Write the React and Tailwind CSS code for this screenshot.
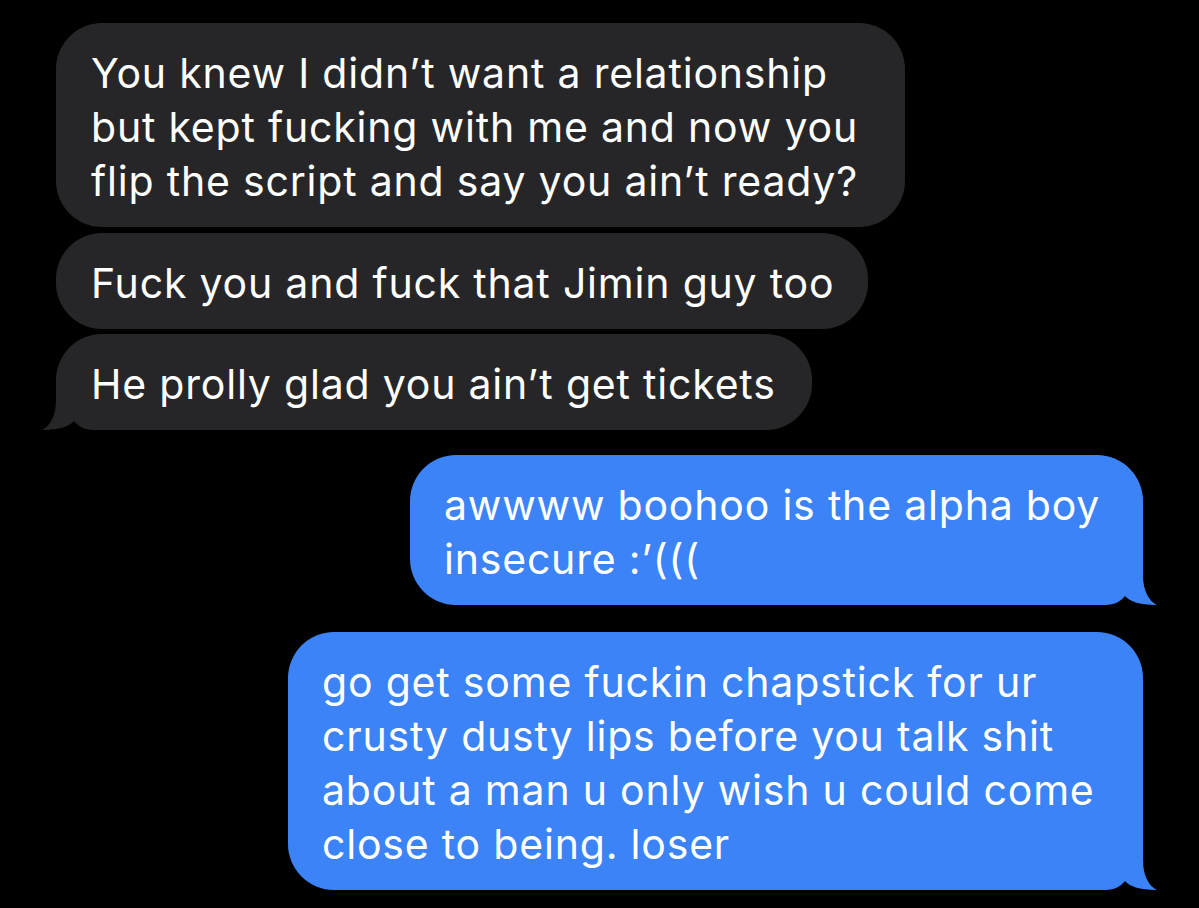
import React from "react";

function Tail({ color, side }) {
  const pos = side === "right" ? "right-[-14px]" : "left-[-14px] -scale-x-100";
  return (
    <svg
      className={`absolute bottom-0 ${pos}`}
      width="60"
      height="50"
      viewBox="0 0 60 50"
    >
      <path
        d="M0,50 L8,50 C18,50 24,46 28,41 C32,46 42,50 60,50 C52,46 46,36 46,20 L46,0 L0,0 Z"
        fill={color}
      />
    </svg>
  );
}

function Bubble({ lines, mine, tail, w, px }) {
  const bg = mine ? "bg-[#3b83f6]" : "bg-[#262628]";
  return (
    <div
      className={`relative ${mine ? "self-end" : "self-start"} ${bg} rounded-[46px] pt-[23px] pb-[19px] ${w} ${px}`}
    >
      {tail && <Tail color={mine ? "#3b83f6" : "#262628"} side={mine ? "right" : "left"} />}
      {lines.map((l, i) => (
        <div key={i} className="relative whitespace-nowrap text-white text-[41px] leading-[54px] tracking-[0.8px]">
          {l}
        </div>
      ))}
    </div>
  );
}

export default function App() {
  return (
    <div
      className="w-[1199px] h-[908px] bg-black overflow-hidden flex flex-col pt-[23px] pl-[56px] pr-[56px]"
      style={{ fontFamily: "Inter, 'Liberation Sans', sans-serif" }}
    >
      <Bubble
        w="w-[849px]"
        px="pl-[35px]"
        lines={[
          "You knew I didn’t want a relationship",
          "but kept fucking with me and now you",
          "flip the script and say you ain’t ready?",
        ]}
      />
      <div className="h-[6px]" />
      <Bubble w="w-[812px]" px="pl-[35px]" lines={["Fuck you and fuck that Jimin guy too"]} />
      <div className="h-[5px]" />
      <Bubble w="w-[756px]" px="pl-[35px]" tail lines={["He prolly glad you ain’t get tickets"]} />
      <div className="h-[25px]" />
      <Bubble
        mine
        tail
        w="w-[733px]"
        px="pl-[34px]"
        lines={["awwww boohoo is the alpha boy", "insecure :’((("]}
      />
      <div className="h-[27px]" />
      <Bubble
        mine
        tail
        w="w-[855px]"
        px="pl-[34px]"
        lines={[
          "go get some fuckin chapstick for ur",
          "crusty dusty lips before you talk shit",
          "about a man u only wish u could come",
          "close to being. loser",
        ]}
      />
    </div>
  );
}
